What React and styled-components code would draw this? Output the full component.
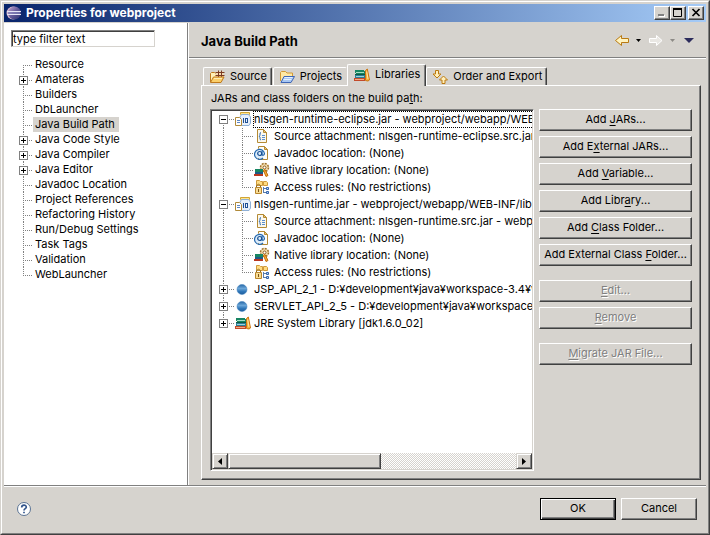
import React from "react";
import styled, { createGlobalStyle, css } from "styled-components";

const face = "#d6d3ce";
const shade = "#808080";
const dark = "#404040";

const Global = createGlobalStyle`
  * { box-sizing: border-box; }
  body { margin: 0; background: ${face}; }
  body, button, input { font: 11px/15px Inter, "Liberation Sans", sans-serif; color: #000; }
  button { margin: 0; padding: 0; cursor: default; }
  ul { margin: 0; padding: 0; list-style: none; }
`;

const raised = css`
  border: 1px solid;
  border-color: #fff ${dark} ${dark} #fff;
  box-shadow: inset -1px -1px ${shade};
  background: ${face};
`;

const Frame = styled.div`
  min-height: 100vh;
  display: flex;
  flex-direction: column;
  border: 1px solid;
  border-color: ${face} ${dark} ${dark} ${face};
  background: ${face};
`;
const FrameInner = styled.div`
  flex: 1;
  display: flex;
  flex-direction: column;
  border: 1px solid;
  border-color: #fff ${shade} ${shade} #fff;
  padding: 2px 2px 0;
`;

const TitleBar = styled.header`
  height: 18px;
  display: flex;
  align-items: center;
  padding: 0 2px;
  gap: 4px;
  background: linear-gradient(to right, #08246b, #a5cbf7);
`;
const Title = styled.h1`
  flex: 1;
  margin: 0;
  color: #fff;
  font-size: 12px;
  line-height: 16px;
  font-weight: 700;
`;
const CaptionButtons = styled.div`
  display: flex;
`;
const CaptionButton = styled.button`
  ${raised}
  width: 16px;
  height: 14px;
  display: flex;
  margin-left: ${(p) => (p.$apart ? "2px" : "0")};
  svg { display: block; width: 13px; height: 11px; }
`;

const Main = styled.div`
  flex: 1;
  display: flex;
  margin-top: 1px;
  border-bottom: 1px solid ${shade};
`;
const Sidebar = styled.nav`
  flex: 0 0 184px;
  background: #fff;
  border-right: 1px solid ${shade};
  padding: 7px 7px 0;
`;
const FilterInput = styled.input`
  display: block;
  width: 144px;
  height: 17px;
  padding: 0 0 0 1px;
  border: 1px solid;
  border-color: ${shade} ${face} ${face} ${shade};
  box-shadow: inset 1px 1px ${dark};
  background: #fff;
  outline: none;
  border-radius: 0;
`;
const CategoryTree = styled.ul`
  padding: 10px 0 0 8px;
`;
const CategoryRow = styled.li`
  display: flex;
  height: 15px;
`;
const CategoryLink = styled.a`
  padding: 0 4px 0 2px;
  line-height: 15px;
  color: #000;
  text-decoration: none;
  background: ${(p) => (p.$selected ? face : "transparent")};
`;

const dotsDown = `repeating-linear-gradient(to bottom, ${shade} 0 1px, transparent 1px 2px)`;
const dotsAcross = `repeating-linear-gradient(to right, ${shade} 0 1px, transparent 1px 2px)`;
const Guide = styled.span`
  flex: 0 0 ${(p) => p.$width}px;
  padding-top: 4px;
  background:
    ${dotsDown} ${(p) => p.$x}px ${(p) => (p.$first ? 8 : 0)}px / 1px ${(p) => (p.$last ? "9px" : "100%")} no-repeat,
    ${dotsAcross} ${(p) => p.$x}px 8px / ${(p) => (p.$through ? 0 : p.$width - p.$x - 1)}px 1px no-repeat;
`;
const Expander = styled.button`
  display: block;
  width: 9px;
  height: 9px;
  border: 1px solid ${shade};
  background:
    linear-gradient(#000, #000) 1px 3px / 5px 1px no-repeat,
    linear-gradient(#000, #000) 3px 1px / 1px ${(p) => (p.$open ? 0 : 5)}px no-repeat,
    #fff;
`;

const Page = styled.main`
  flex: 1;
  min-width: 0;
  display: flex;
  flex-direction: column;
  border-left: 1px solid #fff;
`;
const PageHead = styled.div`
  height: 36px;
  display: flex;
  align-items: center;
  padding: 0 10px 0 12px;
  border-bottom: 1px solid #fff;
  box-shadow: inset 0 -1px ${shade};
`;
const PageTitle = styled.h2`
  flex: 1;
  margin: 0;
  font-size: 13px;
  line-height: 18px;
  font-weight: 700;
`;
const NavTools = styled.div`
  display: flex;
  align-items: center;
`;
const NavButton = styled.button`
  display: flex;
  border: 0;
  background: none;
  width: ${(p) => p.$width}px;
  justify-content: center;
`;

const PageBody = styled.div`
  flex: 1;
  display: flex;
  flex-direction: column;
  padding: 5px 5px 5px 12px;
`;
const TabStrip = styled.div`
  display: flex;
  align-items: flex-end;
  height: 22px;
  padding-left: 2px;
  margin-bottom: -1px;
`;
const Tab = styled.button`
  display: flex;
  align-items: center;
  gap: 5px;
  height: ${(p) => (p.$active ? 22 : 18)}px;
  margin-bottom: ${(p) => (p.$active ? 0 : 1)}px;
  padding: ${(p) => (p.$active ? "0 5px 2px 6px" : "0 4px 0 5px")};
  margin-right: ${(p) => p.$gap || 0}px;
  border: 1px solid;
  border-color: #fff ${(p) => (p.$flat ? "transparent" : dark)} transparent #fff;
  border-bottom: 0;
  border-radius: 2px 2px 0 0;
  box-shadow: ${(p) => (p.$flat ? "none" : `inset -1px 0 ${shade}`)};
  background: ${face};
  position: relative;
  z-index: 1;
  white-space: nowrap;
`;
const Panel = styled.section`
  ${raised}
  flex: 1;
  display: flex;
  flex-direction: column;
  padding: 4px 8px 8px;
`;
const PanelLabel = styled.label`
  padding-left: 1px;
  line-height: 17px;
`;
const Columns = styled.div`
  flex: 1;
  display: flex;
  gap: 5px;
  margin-top: 2px;
`;
const ListBox = styled.div`
  flex: 1;
  min-width: 0;
  display: flex;
  flex-direction: column;
  background: #fff;
  border: 1px solid;
  border-color: ${shade} #fff #fff ${shade};
  box-shadow: inset 1px 1px ${dark}, inset -1px -1px ${face};
  padding: 1px;
`;
const JarTree = styled.ul`
  flex: 1;
  padding-left: 7px;
  overflow: hidden;
`;
const JarRow = styled.li`
  display: flex;
  height: 17px;
  white-space: nowrap;
  > svg { flex: none; margin-right: 2px; }
`;
const JarLabel = styled.span`
  flex: 1 0 auto;
  line-height: 15px;
  border: 1px ${(p) => (p.$focused ? "dotted #000" : "solid transparent")};
  padding-left: ${(p) => (p.$detail ? 1 : 0)}px;
`;

const ScrollBar = styled.div`
  display: flex;
  height: 16px;
  background: repeating-conic-gradient(#fff 0 25%, ${face} 0 50%) 0 0 / 2px 2px;
`;
const ScrollArrow = styled.button`
  flex: 0 0 16px;
  display: flex;
  align-items: center;
  justify-content: center;
  ${raised}
  border-color: ${face} ${dark} ${dark} ${face};
  box-shadow: inset 1px 1px #fff, inset -1px -1px ${shade};
`;
const ScrollTrack = styled.div`
  flex: 1;
`;
const ScrollThumb = styled.div`
  ${raised}
  width: 53%;
  height: 100%;
  border-color: ${face} ${dark} ${dark} ${face};
  box-shadow: inset 1px 1px #fff, inset -1px -1px ${shade};
`;

const Actions = styled.div`
  flex: 0 0 153px;
  display: flex;
  flex-direction: column;
  gap: 5px;
`;
const PushButton = styled.button`
  ${raised}
  height: 22px;
  padding-bottom: 2px;
  margin-top: ${(p) => (p.$group ? "9px" : "0")};
  white-space: nowrap;
  text-underline-offset: 2px;
  &:disabled { color: ${shade}; text-shadow: 1px 1px #fff; }
`;

const Footer = styled.footer`
  height: 47px;
  display: flex;
  align-items: center;
  padding: 0 9px 3px 12px;
  gap: 5px;
  border-top: 1px solid #fff;
`;
const FooterButton = styled(PushButton)`
  width: 76px;
  padding-bottom: 1px;
  ${(p) =>
    p.$default &&
    css`
      border-color: #000;
      box-shadow: inset 1px 1px #fff, inset -1px -1px ${dark}, inset -2px -2px ${shade};
    `}
`;
const HelpButton = styled.button`
  display: flex;
  border: 0;
  background: none;
  margin-right: auto;
`;

const Icon = ({ children, w = 16, h = 16 }) => (
  <svg width={w} height={h} viewBox={`0 0 ${w} ${h}`} aria-hidden="true">{children}</svg>
);

const EclipseIcon = () => (
  <Icon>
    <defs>
      <linearGradient id="moon" x1="0" y1="0" x2="1" y2="1">
        <stop offset="0" stopColor="#c9a9cf" />
        <stop offset=".45" stopColor="#6a609f" />
        <stop offset="1" stopColor="#29306e" />
      </linearGradient>
    </defs>
    <circle cx="7" cy="8" r="6.5" fill="#d8b7cd" />
    <circle cx="8.5" cy="8" r="6.5" fill="url(#moon)" />
    <path d="M1 6.5h14M1 9.5h14" stroke="#e6e6f6" />
    <path d="M2 8h12" stroke="#8e91c4" />
  </Icon>
);
const SourceIcon = () => (
  <Icon>
    <path d="M1.500 13v-8.500l1-1h3l1.500 1.500h5v3" fill="#fff0b8" stroke="#c07a1c" />
    <path d="M6.500 2.500h8v6h-8z" fill="#f7dcae" />
    <path d="M9.500 1.500v7M12.500 1.500v7M6.500 3.500h9M6.500 6.500h9" stroke="#7a3a22" />
    <path d="M1.500 13.500l3-5.500h10.500l-3 5.500z" fill="#fbcf6a" stroke="#c07a1c" strokeLinejoin="round" />
    <path d="M5 9.500h8" stroke="#ffedb5" />
  </Icon>
);
const ProjectsIcon = () => (
  <Icon>
    <path d="M1.500 12v-8.500l1-1h4l1.500 1.500h5.500v3" fill="#ffe9a4" stroke="#d39a34" />
    <path d="M2 13.500l3-6h10.500l-3.500 6z" fill="#a9c8f3" stroke="#3f66b5" strokeLinejoin="round" />
    <path d="M5.500 8.500h8M4.500 10.500h8" stroke="#e4f0ff" />
  </Icon>
);
const BooksIcon = () => (
  <Icon>
    <path d="M1 3h9v1h1v3H2V6H1z" fill="#178562" />
    <path d="M2 5.500h8" stroke="#a6dfc4" />
    <path d="M1 7.500h10" stroke="#0d5a44" />
    <path d="M1 8h10v3H1z" fill="#2b7f96" />
    <path d="M2 9.500h8" stroke="#9ed3dc" />
    <path d="M0 11h11v3H0z" fill="#c24a2a" />
    <path d="M1 12.500h9" stroke="#f3ad84" />
    <path d="M11.500 3.500l1.800-1.500 2.200 11-1.500 1-2.500-.5z" fill="#f8b33c" stroke="#cb7410" />
    <path d="M12.700 4.500l1.300 7.500" stroke="#ffe6a6" />
  </Icon>
);
const OrderIcon = () => (
  <Icon>
    <path d="M3.500 1.500h3v3.500h2.500l-4 4-4-4h2.500z" fill="#fff0bc" stroke="#bd7b10" strokeLinejoin="round" />
    <path d="M10 14.500h3v-3.500h2.500l-4-4-4 4H10z" fill="#fff0bc" stroke="#bd7b10" strokeLinejoin="round" />
  </Icon>
);
const JarIcon = () => (
  <Icon>
    <path d="M5.500 1.500h9v2h-9z" fill="#ffe58a" stroke="#d0a436" />
    <path d="M6.500 3.500h7l2 2.500v6l-1.500 2.500h-8l-1-2V6z" fill="#e6f0fb" stroke="#8fb0d6" />
    <path d="M8.500 7v5" stroke="#1f4f94" />
    <rect x="10.500" y="7.500" width="2" height="4" fill="none" stroke="#1f4f94" />
    <path d="M.5 6.500h4l2 2v6h-6z" fill="#fff" stroke="#b08a3a" />
    <path d="M2 9.500h3M2 11.500h3" stroke="#5c86c4" />
  </Icon>
);
const SourceFileIcon = () => (
  <Icon>
    <path d="M3.500 1.500h6l3 3v10h-9z" fill="#fbf8ee" stroke="#b48a34" />
    <path d="M9.500 1.500v3h3z" fill="#f0c870" stroke="#b48a34" />
    <path d="M7 4.500c-2 0 0 3-1.800 3.700 1.800.6-.2 3.800 1.800 3.800" fill="none" stroke="#2a63aa" />
    <path d="M8 7.500h3M8 9.500h3M8 11.500h3" stroke="#5b8fcf" />
  </Icon>
);
const JavadocIcon = () => (
  <Icon>
    <path d="M4.500 1.500h6l3 3v10h-9z" fill="#fdfdfb" stroke="#b48a34" />
    <path d="M10.500 1.500v3h3z" fill="#f0c870" stroke="#b48a34" />
    <circle cx="5.500" cy="8.500" r="5" fill="#dcecf9" />
    <path d="M9 13a5 5 0 1 1 1.500-4.500c0 2-2.500 2.500-2.500.5V6" fill="none" stroke="#2468ae" strokeWidth="1.200" />
    <circle cx="5.700" cy="8.500" r="2" fill="none" stroke="#174f94" strokeWidth="1.200" />
  </Icon>
);
const NativeIcon = () => (
  <Icon>
    <circle cx="10.500" cy="5.500" r="4" fill="#f4dfb0" stroke="#a0712a" strokeWidth="1.500" strokeDasharray="2 1.100" />
    <circle cx="10.500" cy="5.500" r="1.500" fill="#fff" stroke="#8b5c20" />
    <path d="M1 7h8v3H1z" fill="#178562" />
    <path d="M1 10h8v2H1z" fill="#1f5a86" />
    <path d="M0 12h9v2H0z" fill="#b8361f" />
    <path d="M9.500 8.500l1.500-1 3 6-2 1z" fill="#f6ae35" stroke="#c26c0c" />
  </Icon>
);
const AccessIcon = () => (
  <Icon>
    <path d="M2.500 1.500h3l1 1h2v4h-6zM9.500 2.500h3l1 1v3h-4z" fill="#ffdc82" stroke="#d09a3a" />
    <path d="M9.500 8v6M9.500 9.500h3M9.500 13.500h3" stroke="#5a7cab" />
    <path d="M12.500 8.500h2v2h-2zM12.500 12.500h2v2h-2z" fill="#b9d4f5" stroke="#3565ae" />
    <path d="M2.500 8.500v-2q2-2.500 4 0v2" fill="none" stroke="#8d6a26" />
    <path d="M1.500 8.500h6v6h-6z" fill="#f8dc94" stroke="#b9862d" />
    <path d="M4.500 10v3" stroke="#7c5417" />
  </Icon>
);
const VariableIcon = () => (
  <Icon>
    <defs>
      <linearGradient id="ball" x1="0" y1="0" x2="0" y2="1">
        <stop offset="0" stopColor="#2667a6" />
        <stop offset=".4" stopColor="#6ba6d8" />
        <stop offset=".7" stopColor="#2f76b8" />
        <stop offset="1" stopColor="#1f5d9c" />
      </linearGradient>
    </defs>
    <circle cx="7" cy="8.500" r="5" fill="url(#ball)" stroke="#3b7dbb" strokeWidth=".5" />
  </Icon>
);
const Arrow = ({ forward }) => (
  <Icon w={16} h={13}>
    {forward ? (
      <path d="M1.500 4.500h7v-3l5.500 5-5.500 5v-3h-7z" fill="#e9e7e3" stroke="#fff" strokeLinejoin="round" />
    ) : (
      <path d="M14.500 4.500h-7v-3L1.500 6.500l6 5v-3h7z" fill="#fff3bf" stroke="#b97a12" strokeLinejoin="round" />
    )}
  </Icon>
);
const Caret = ({ color, w = 5, h = 3 }) => (
  <Icon w={w} h={h}><path d={`M0 0h${w}L${w / 2} ${h}z`} fill={color} /></Icon>
);

const categories = [
  ["Resource"], ["Amateras", true], ["Builders"], ["DbLauncher"], ["Java Build Path"],
  ["Java Code Style", true], ["Java Compiler", true], ["Java Editor", true],
  ["Javadoc Location"], ["Project References"], ["Refactoring History"],
  ["Run/Debug Settings"], ["Task Tags"], ["Validation"], ["WebLauncher"],
];

const details = (source) => [
  [SourceFileIcon, `Source attachment: ${source}`],
  [JavadocIcon, "Javadoc location: (None)"],
  [NativeIcon, "Native library location: (None)"],
  [AccessIcon, "Access rules: (No restrictions)"],
];
const entries = [
  { icon: JarIcon, text: "nlsgen-runtime-eclipse.jar - webproject/webapp/WEB", children: details("nlsgen-runtime-eclipse.src.jar") },
  { icon: JarIcon, text: "nlsgen-runtime.jar - webproject/webapp/WEB-INF/lib", children: details("nlsgen-runtime.src.jar - webpro") },
  { icon: VariableIcon, text: "JSP_API_2_1 - D:¥development¥java¥workspace-3.4¥w" },
  { icon: VariableIcon, text: "SERVLET_API_2_5 - D:¥development¥java¥workspace-" },
  { icon: BooksIcon, text: "JRE System Library [jdk1.6.0_02]" },
];

const actions = [
  ["Add ", "J", "ARs..."], ["Add E", "x", "ternal JARs..."], ["Add ", "V", "ariable..."],
  ["Add Libr", "a", "ry..."], ["Add ", "C", "lass Folder..."], ["Add External Class ", "F", "older..."],
  ["", "E", "dit...", "off", "group"], ["", "R", "emove", "off"], ["", "M", "igrate JAR File...", "off", "group"],
];

export default function App() {
  return (
    <Frame>
      <Global />
      <FrameInner>
        <TitleBar>
          <EclipseIcon />
          <Title>Properties for webproject</Title>
          <CaptionButtons>
            <CaptionButton aria-label="Minimize">
              <svg viewBox="0 0 13 11"><path d="M4 9h6" stroke="#fff" strokeWidth="2" /><path d="M3 8h6" stroke={shade} strokeWidth="2" /></svg>
            </CaptionButton>
            <CaptionButton aria-label="Maximize">
              <svg viewBox="0 0 13 11"><path d="M2.500 2v7.500h8V2" fill="none" stroke="#000" /><path d="M2 2h9" stroke="#000" strokeWidth="2" /></svg>
            </CaptionButton>
            <CaptionButton aria-label="Close" $apart>
              <svg viewBox="0 0 13 11"><path d="M3.500 2l7 7M10.500 2l-7 7" stroke="#000" strokeWidth="1.700" /></svg>
            </CaptionButton>
          </CaptionButtons>
        </TitleBar>
        <Main>
          <Sidebar aria-label="Categories">
            <FilterInput aria-label="Filter" defaultValue="type filter text" />
            <CategoryTree>
              {categories.map(([name, expandable], i) => (
                <CategoryRow key={name}>
                  <Guide $width={14} $x={4} $first={i === 0} $last={i === categories.length - 1}>
                    {expandable && <Expander aria-label={`Expand ${name}`} />}
                  </Guide>
                  <CategoryLink href="#" $selected={name === "Java Build Path"}>{name}</CategoryLink>
                </CategoryRow>
              ))}
            </CategoryTree>
          </Sidebar>
          <Page>
            <PageHead>
              <PageTitle>Java Build Path</PageTitle>
              <NavTools>
                <NavButton $width={17} aria-label="Back"><Arrow /></NavButton>
                <NavButton $width={17} aria-label="Back history"><Caret color="#000" /></NavButton>
                <NavButton $width={17} aria-label="Forward" disabled><Arrow forward /></NavButton>
                <NavButton $width={17} aria-label="Forward history" disabled><Caret color="#8c8a86" /></NavButton>
                <NavButton $width={15} aria-label="Menu"><Caret color="#2c2c5c" w={10} h={5} /></NavButton>
              </NavTools>
            </PageHead>
            <PageBody>
              <TabStrip role="tablist">
                <Tab role="tab" $gap={1}><SourceIcon />Source</Tab>
                <Tab role="tab" $flat><ProjectsIcon />Projects</Tab>
                <Tab role="tab" aria-selected="true" $active><BooksIcon />Libraries</Tab>
                <Tab role="tab"><OrderIcon />Order and Export</Tab>
              </TabStrip>
              <Panel>
                <PanelLabel id="jars-label">JARs and class folders on the build pa<u>t</u>h:</PanelLabel>
                <Columns>
                  <ListBox>
                    <JarTree aria-labelledby="jars-label">
                      {entries.map((entry, i) => {
                        const EntryIcon = entry.icon;
                        const last = i === entries.length - 1;
                        return (
                          <React.Fragment key={entry.text}>
                            <JarRow>
                              <Guide $width={16} $x={4} $first={i === 0} $last={last}>
                                <Expander $open={!!entry.children} aria-label={`Toggle ${entry.text}`} />
                              </Guide>
                              <EntryIcon />
                              <JarLabel $focused={i === 0}>{entry.text}</JarLabel>
                            </JarRow>
                            {entry.children?.map(([DetailIcon, text], k) => (
                              <JarRow key={text}>
                                <Guide $width={16} $x={4} $through />
                                <Guide $width={19} $x={7} $last={k === entry.children.length - 1} />
                                <DetailIcon />
                                <JarLabel $detail>{text}</JarLabel>
                              </JarRow>
                            ))}
                          </React.Fragment>
                        );
                      })}
                    </JarTree>
                    <ScrollBar>
                      <ScrollArrow aria-label="Scroll left"><Icon w={4} h={7}><path d="M4 0v7L0 3.500z" /></Icon></ScrollArrow>
                      <ScrollTrack><ScrollThumb /></ScrollTrack>
                      <ScrollArrow aria-label="Scroll right"><Icon w={4} h={7}><path d="M0 0v7l4-3.500z" /></Icon></ScrollArrow>
                    </ScrollBar>
                  </ListBox>
                  <Actions>
                    {actions.map(([before, key, after, off, group]) => (
                      <PushButton key={before + key} disabled={!!off} $group={!!group}>
                        {before}<u>{key}</u>{after}
                      </PushButton>
                    ))}
                  </Actions>
                </Columns>
              </Panel>
            </PageBody>
          </Page>
        </Main>
        <Footer>
          <HelpButton aria-label="Help">
            <Icon>
              <circle cx="8" cy="8" r="6.500" fill="#fff" stroke="#5a7394" />
              <path d="M5.700 6.500c0-3 4.600-3 4.600-.3 0 1.500-2.300 1.500-2.300 3.300M8 10.800v1.500" fill="none" stroke="#33558c" strokeWidth="1.700" />
            </Icon>
          </HelpButton>
          <FooterButton $default>OK</FooterButton>
          <FooterButton>Cancel</FooterButton>
        </Footer>
      </FrameInner>
    </Frame>
  );
}
